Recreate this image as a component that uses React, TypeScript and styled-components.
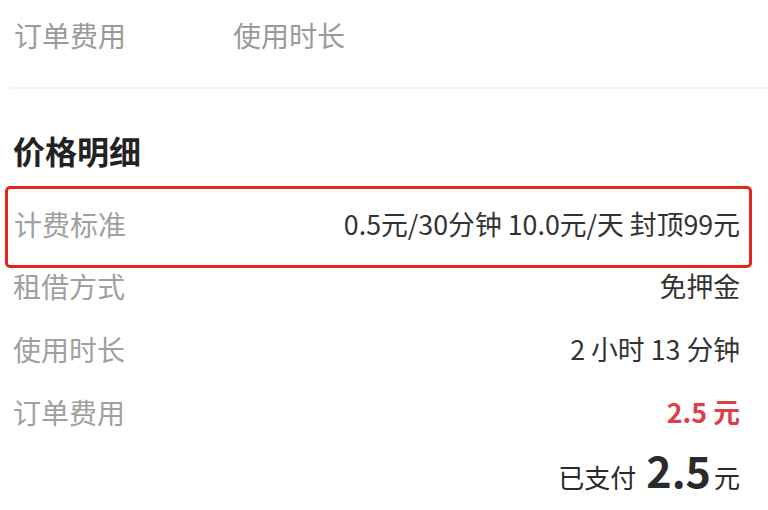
import React from "react";
import styled, { createGlobalStyle } from "styled-components";

const GlobalStyle = createGlobalStyle`
    body {
        margin: 0;
        background: #fff;
        font-family: "Noto Sans CJK SC", "Noto Sans", sans-serif;
    }
`;

const Page = styled.div`
    width: 768px;
    height: 510px;
    overflow: hidden;
    background: #fff;
`;

const TabBar = styled.div`
    display: flex;
    gap: 107px;
    height: 66px;
    margin-left: 10px;
    padding: 21px 0 0 4px;
    border-bottom: 2px solid #f0f0f0;
`;

const Tab = styled.div`
    font-size: 28px;
    line-height: 28px;
    color: #9a9a9a;
`;

const Section = styled.div`
    padding: 0 28px 0 13px;
`;

const Title = styled.h3`
    margin: 45px 0 20px;
    font-size: 32px;
    line-height: 32px;
    font-weight: 700;
    color: #222;
`;

const Rows = styled.div`
    display: flex;
    flex-direction: column;
    gap: 35px;
`;

const Row = styled.div<{ $highlight?: boolean }>`
    display: flex;
    justify-content: space-between;
    align-items: center;
    line-height: 28px;

    ${(p) =>
        p.$highlight &&
        `
        height: 69px;
        margin: 0 -12px -31px -8px;
        padding: 0 9px 7px 6px;
        border: 3px solid #e2261c;
        border-radius: 5px;
    `}
`;

const Label = styled.span`
    font-size: 28px;
    color: #a0a0a0;
`;

const Value = styled.span<{ $red?: boolean }>`
    font-size: 26.8px;
    color: ${(p) => (p.$red ? "#d8404a" : "#333")};
    font-weight: ${(p) => (p.$red ? 600 : 400)};
`;

const Paid = styled.div`
    display: flex;
    justify-content: flex-end;
    align-items: baseline;
    margin-top: 20px;
    color: #2a2a2a;
    font-size: 26px;

    strong {
        font-size: 43px;
        font-weight: 700;
        margin: 0 3px 0 10px;
        line-height: 46px;
    }
`;

const rows = [
    { label: "租借方式", value: "免押金" },
    { label: "使用时长", value: "2 小时 13 分钟" },
    { label: "订单费用", value: "2.5 元", red: true },
];

const App = () => {
    return (
        <>
            <GlobalStyle />
            <Page>
                <TabBar>
                    <Tab>订单费用</Tab>
                    <Tab>使用时长</Tab>
                </TabBar>
                <Section>
                    <Title>价格明细</Title>
                    <Rows>
                        <Row $highlight>
                            <Label>计费标准</Label>
                            <Value>0.5元/30分钟 10.0元/天 封顶99元</Value>
                        </Row>
                        {rows.map((r) => (
                            <Row key={r.label}>
                                <Label>{r.label}</Label>
                                <Value $red={r.red}>{r.value}</Value>
                            </Row>
                        ))}
                    </Rows>
                    <Paid>
                        已支付<strong>2.5</strong>元
                    </Paid>
                </Section>
            </Page>
        </>
    );
};

export default App;
